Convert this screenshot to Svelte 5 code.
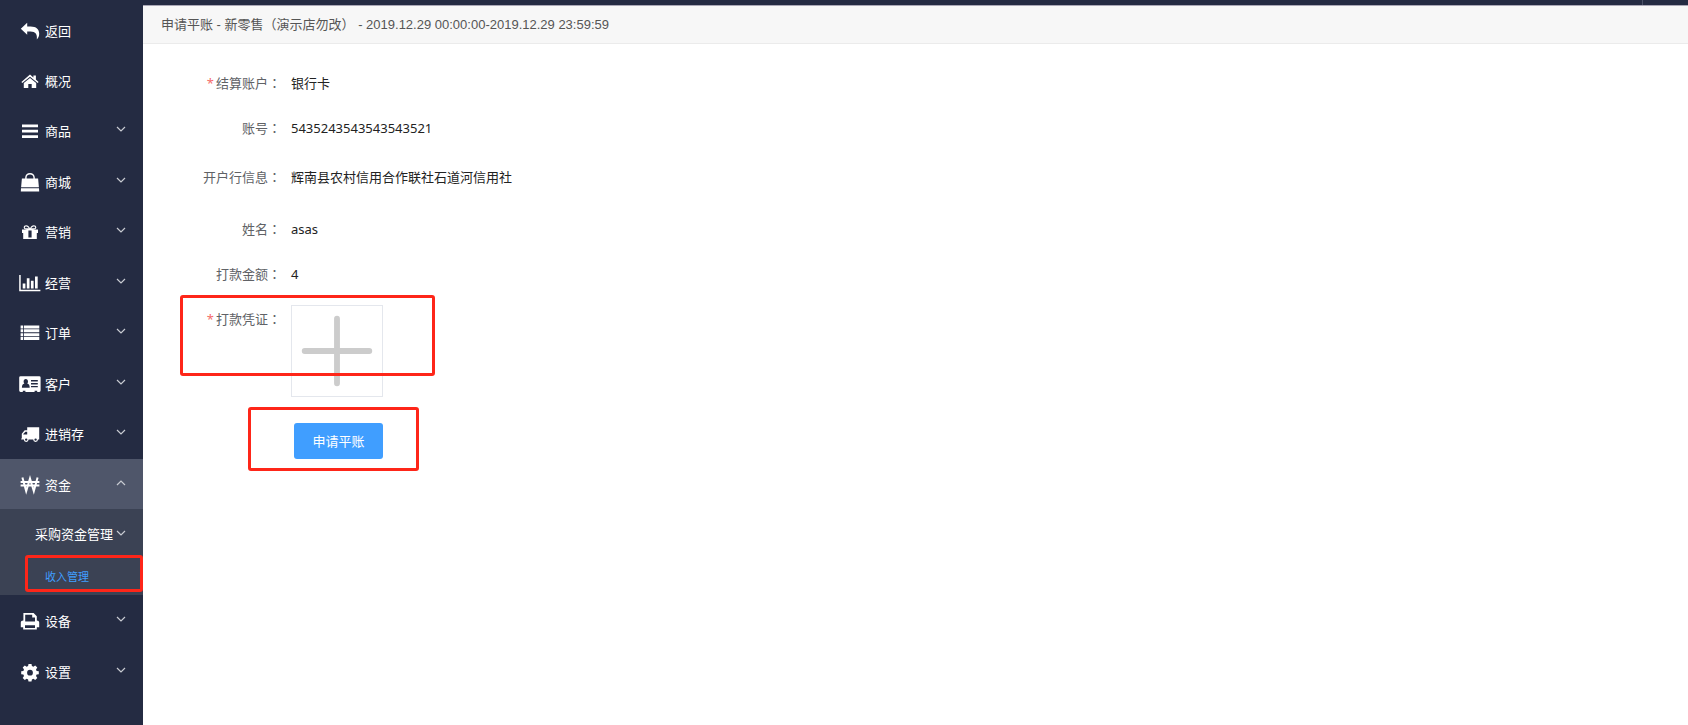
<script>
  let activeMenu = 'funds';

  const menus = [
    { id: 'back', label: '返回' },
    { id: 'home', label: '概况' },
    { id: 'goods', label: '商品', arrow: true },
    { id: 'mall', label: '商城', arrow: true },
    { id: 'gift', label: '营销', arrow: true },
    { id: 'chart', label: '经营', arrow: true },
    { id: 'order', label: '订单', arrow: true },
    { id: 'customer', label: '客户', arrow: true },
    { id: 'stock', label: '进销存', arrow: true },
    { id: 'funds', label: '资金', arrow: true },
    { id: 'device', label: '设备', arrow: true },
    { id: 'setting', label: '设置', arrow: true }
  ];

  // 24x24 glyphs, filled with evenodd so inner shapes are cut out
  const icons = {
    back: 'M2.8 9.7L9.2 3.8V7.4H12.5C18.3 7.4 21.2 10.2 21.2 14.7C21.2 17 20.3 19 18.8 20.4C19.5 15.3 17.6 12.7 12.5 12.5H9.2V15.7Z',
    home: 'M12 5.6L15.4 8.5V6.5H17.9V10.6L20.6 12.9L19.7 14L12 7.7L4.3 14L3.4 12.9ZM12 9L18.2 14V19H13.7V15H10.3V19H5.8V14Z',
    goods: 'M4 5.4H20V8.2H4ZM4 10.8H20V13.6H4ZM4 16.2H20V19H4Z',
    mall: 'M3.9 8.4H7.2V7.6C7.2 4.8 9.2 3 12 3S16.8 4.8 16.8 7.6V8.4H20.1L20.9 17.2H3.1ZM8.6 8.4H15.4V7.6C15.4 5.6 14 4.4 12 4.4S8.6 5.6 8.6 7.6ZM3 18.2H21L21.2 21.6H2.8Z',
    gift: 'M4 9.4H9.1C6.6 9.4 5.7 8.6 5.7 7.4C5.7 6 6.8 5.3 8.2 5.3C9.8 5.3 11 6.4 12 8.3C13 6.4 14.2 5.3 15.8 5.3C17.2 5.3 18.3 6 18.3 7.4C18.3 8.6 17.4 9.4 14.9 9.4H20V13H18.8V19H5.2V13H4ZM8.1 6.5C7.2 6.5 6.9 7 6.9 7.4C6.9 8 7.4 8.3 8.3 8.3H10.8C9.9 7 9.1 6.5 8.1 6.5ZM15.9 6.5C14.9 6.5 14.1 7 13.2 8.3H15.7C16.6 8.3 17.1 8 17.1 7.4C17.1 7 16.8 6.5 15.9 6.5ZM10.4 10.4V17.4H13.6V10.4Z',
    chart: 'M1.2 4H2.7V18.8H22.4V20.3H1.2ZM4.7 12.6H7.4V17.6H4.7ZM8.8 7.2H11.5V17.6H8.8ZM12.9 9.8H15.6V17.6H12.9ZM17 5.4H19.7V17.6H17Z',
    order: 'M2.6 4.4H5.2V7.4H2.6ZM6 4.4H21.3V7.4H6ZM2.6 8.3H5.2V11.3H2.6ZM6 8.3H21.3V11.3H6ZM2.6 12.2H5.2V15.2H2.6ZM6 12.2H21.3V15.2H6ZM2.6 16.1H5.2V19.1H2.6ZM6 16.1H21.3V19.1H6Z',
    customer: 'M2.6 4.2H21.2Q22.6 4.2 22.6 5.6V18.6Q22.6 20 21.2 20H19.2V18.8H16.6V20H7.4V18.8H4.8V20H2.6Q1.2 20 1.2 18.6V5.6Q1.2 4.2 2.6 4.2ZM7.8 7.1C6.5 7.1 5.6 8.1 5.6 9.4C5.6 10.3 5.9 11 6.4 11.5C4.7 11.8 3.9 13.1 3.9 15.8H11.7C11.7 13.1 10.9 11.8 9.2 11.5C9.7 11 10 10.3 10 9.4C10 8.1 9.1 7.1 7.8 7.1ZM13 8.1H19.8V9.5H13ZM13 11H19.8V12.4H13ZM13 13.9H19.8V15.3H13Z',
    stock: 'M9.2 5.2H21.2V17.6H20A2.4 2.4 0 0 1 15.2 17.6H10.6A2.4 2.4 0 0 1 5.8 17.6H3.2V16.4H3.8V11.8L6.7 8.3H9.2ZM5.3 12.4H9.2V9.7H7.4L5.3 12ZM8.2 16.4A1.2 1.2 0 1 0 8.2 18.8A1.2 1.2 0 1 0 8.2 16.4ZM17.6 16.4A1.2 1.2 0 1 0 17.6 18.8A1.2 1.2 0 1 0 17.6 16.4Z',
    device: 'M5.4 4H15.6L18.8 7.2V11.4C20.2 11.4 21.2 12.2 21.2 13.6V18.2H18.8V20.6H5.2V18.2H2.8V13.6C2.8 12.2 3.8 11.4 5.4 11.4ZM7.2 5.8V12.6H17V8.6H14.2V5.8ZM7 16.2V18.9H17V16.2Z',
    setting: 'M10.5 4H13.5L13.9 6.1L15.4 6.8L17.2 5.5L19.3 7.6L18 9.4L18.6 10.9L20.8 11.3V14.2L18.6 14.6L18 16.1L19.3 17.9L17.2 20L15.4 18.7L13.9 19.4L13.5 21.5H10.5L10.1 19.4L8.6 18.7L6.8 20L4.7 17.9L6 16.1L5.4 14.6L3.2 14.2V11.3L5.4 10.9L6 9.4L4.7 7.6L6.8 5.5L8.6 6.8L10.1 6.1ZM12 9.8A2.9 2.9 0 1 0 12 15.6A2.9 2.9 0 1 0 12 9.8Z'
  };

  const fields = [
    { label: '结算账户', value: '银行卡', required: true },
    { label: '账号', value: '5435243543543543521' },
    { label: '开户行信息', value: '辉南县农村信用合作联社石道河信用社', tall: true },
    { label: '姓名', value: 'asas' },
    { label: '打款金额', value: '4' }
  ];
</script>

{#snippet chevron(up)}
  <svg class="chevron" class:up viewBox="0 0 12 12" aria-hidden="true">
    <path d="M2 4L6 8L10 4" />
  </svg>
{/snippet}

<div class="page">
  <nav class="sidebar">
    <ul>
      {#each menus as menu}
        <li>
          <button class="menu-item" class:active={menu.id === activeMenu}>
            <svg class="icon" viewBox="0 0 24 24" aria-hidden="true">
              {#if menu.id === 'funds'}
                <path class="won" d="M4.4 4.4L8.2 18.2L12 5.4L15.8 18.2L19.6 4.4M2.6 9H21.4M2.6 12.6H21.4" />
              {:else}
                <path fill-rule="evenodd" d={icons[menu.id]} />
              {/if}
            </svg>
            <span>{menu.label}</span>
            {#if menu.arrow}
              {@render chevron(menu.id === activeMenu)}
            {/if}
          </button>
          {#if menu.id === activeMenu}
            <div class="submenu">
              <button class="sub-title">
                <span>采购资金管理</span>
                {@render chevron(false)}
              </button>
              <div class="sub-item">
                <a href="#income">收入管理</a>
                <i class="mark"></i>
              </div>
            </div>
          {/if}
        </li>
      {/each}
    </ul>
  </nav>

  <div class="content">
    <div class="topbar"></div>
    <header>申请平账 - 新零售（演示店勿改） - 2019.12.29 00:00:00-2019.12.29 23:59:59</header>

    <form on:submit|preventDefault>
      {#each fields as field}
        <div class="row" class:tall={field.tall}>
          <span class="label">
            {#if field.required}<em>*</em>{/if}{field.label}<b>：</b>
          </span>
          <span class="value">{field.value}</span>
        </div>
      {/each}

      <div class="row upload-row">
        <label class="label" for="voucher"><em>*</em>打款凭证<b>：</b></label>
        <button type="button" class="upload" id="voucher">
          <svg viewBox="0 0 92 92" aria-hidden="true">
            <path d="M46 13V79M13 46H79" />
          </svg>
        </button>
        <i class="mark"></i>
      </div>

      <div class="row submit-row">
        <div class="submit-wrap">
          <button type="submit" class="submit">申请平账</button>
          <i class="mark"></i>
        </div>
      </div>
    </form>
  </div>
</div>

<style>
  :global(body) {
    background: #fff;
  }

  .page {
    display: flex;
    min-height: 100vh;
    font-family: "Noto Sans", "Noto Sans CJK SC", sans-serif;
    font-size: 13px;
    color: #303133;
  }

  button {
    font: inherit;
    border: 0;
    padding: 0;
    cursor: pointer;
  }

  /* Sidebar */
  .sidebar {
    flex: none;
    width: 143px;
    box-sizing: border-box;
    padding-top: 5px;
    background: #242b42;
  }

  ul {
    list-style: none;
    margin: 0;
    padding: 0;
  }

  li:nth-child(2n + 4) {
    margin-top: 1px;
  }

  .menu-item {
    display: flex;
    align-items: center;
    width: 100%;
    height: 50px;
    padding: 2px 16px 0 18px;
    gap: 3px;
    background: none;
    color: #fff;
  }

  .menu-item span,
  .sub-title span {
    margin-bottom: 2px;
  }

  .menu-item.active {
    background: #4f566a;
  }

  .icon {
    width: 24px;
    height: 24px;
    fill: #fff;
  }

  .won {
    fill: none;
    stroke: #fff;
    stroke-width: 2;
  }

  .chevron {
    width: 12px;
    height: 12px;
    margin-left: auto;
    margin-bottom: 4px;
    fill: none;
    stroke: #c8cbd2;
    stroke-width: 1.2;
  }

  .chevron.up {
    transform: rotate(180deg);
  }

  .submenu {
    background: #3b4254;
  }

  .sub-title {
    display: flex;
    align-items: center;
    width: 100%;
    height: 50px;
    padding: 0 16px 0 35px;
    background: none;
    color: #fff;
    white-space: nowrap;
  }

  .sub-title .chevron {
    margin-bottom: 2px;
  }

  .sub-item {
    position: relative;
    height: 36px;
    padding-left: 45px;
    line-height: 36px;
    font-size: 11px;
  }

  .sub-item a {
    color: #409eff;
    text-decoration: none;
  }

  /* Content */
  .content {
    flex: 1;
    min-width: 0;
  }

  .topbar {
    height: 5px;
    background: linear-gradient(#4b5167, #4b5167) right 45px top / 1px 5px no-repeat #242b42;
    border-bottom: 1px solid #aaa8b6;
  }

  header {
    height: 37px;
    line-height: 37px;
    padding-left: 18px;
    background: #f7f7f7;
    border-bottom: 1px solid #ebebeb;
    font-family: "Liberation Sans", "Noto Sans CJK SC", sans-serif;
    color: #555;
  }

  form {
    padding: 21px 0;
  }

  .row {
    position: relative;
    display: flex;
    margin-bottom: 9px;
    line-height: 36px;
  }

  .row.tall {
    padding: 4px 0 7px;
  }

  .label {
    flex: none;
    width: 138px;
    padding-right: 10px;
    text-align: right;
    color: #606266;
  }

  .label em {
    margin-right: 2px;
    font-style: normal;
    color: #f56c6c;
  }

  /* full-width colon centred in its cell */
  .label b {
    font-family: "Noto Sans CJK TC", sans-serif;
    font-weight: 400;
  }

  .value {
    color: #222;
  }

  .upload {
    width: 92px;
    height: 92px;
    margin-top: 4px;
    background: #fff;
    border: 1px solid #e4e7ed;
  }

  .upload svg {
    display: block;
    width: 100%;
    height: 100%;
    fill: none;
    stroke: #ccc;
    stroke-width: 6;
    stroke-linecap: round;
  }

  .submit-row {
    margin-top: 26px;
    padding-left: 151px;
  }

  .submit-wrap {
    position: relative;
  }

  .submit {
    display: block;
    width: 89px;
    height: 36px;
    border-radius: 3px;
    background: #409eff;
    color: #fff;
  }

  /* Red highlight frames */
  .mark {
    position: absolute;
    box-sizing: border-box;
    border: 3px solid #fe2619;
    border-radius: 3px;
    pointer-events: none;
  }

  .sub-item .mark {
    inset: -4px 0 3px 25px;
  }

  .upload-row .mark {
    top: -6px;
    left: 37px;
    width: 255px;
    height: 81px;
  }

  .submit-row .mark {
    inset: -16px -36px -12px -46px;
  }
</style>
